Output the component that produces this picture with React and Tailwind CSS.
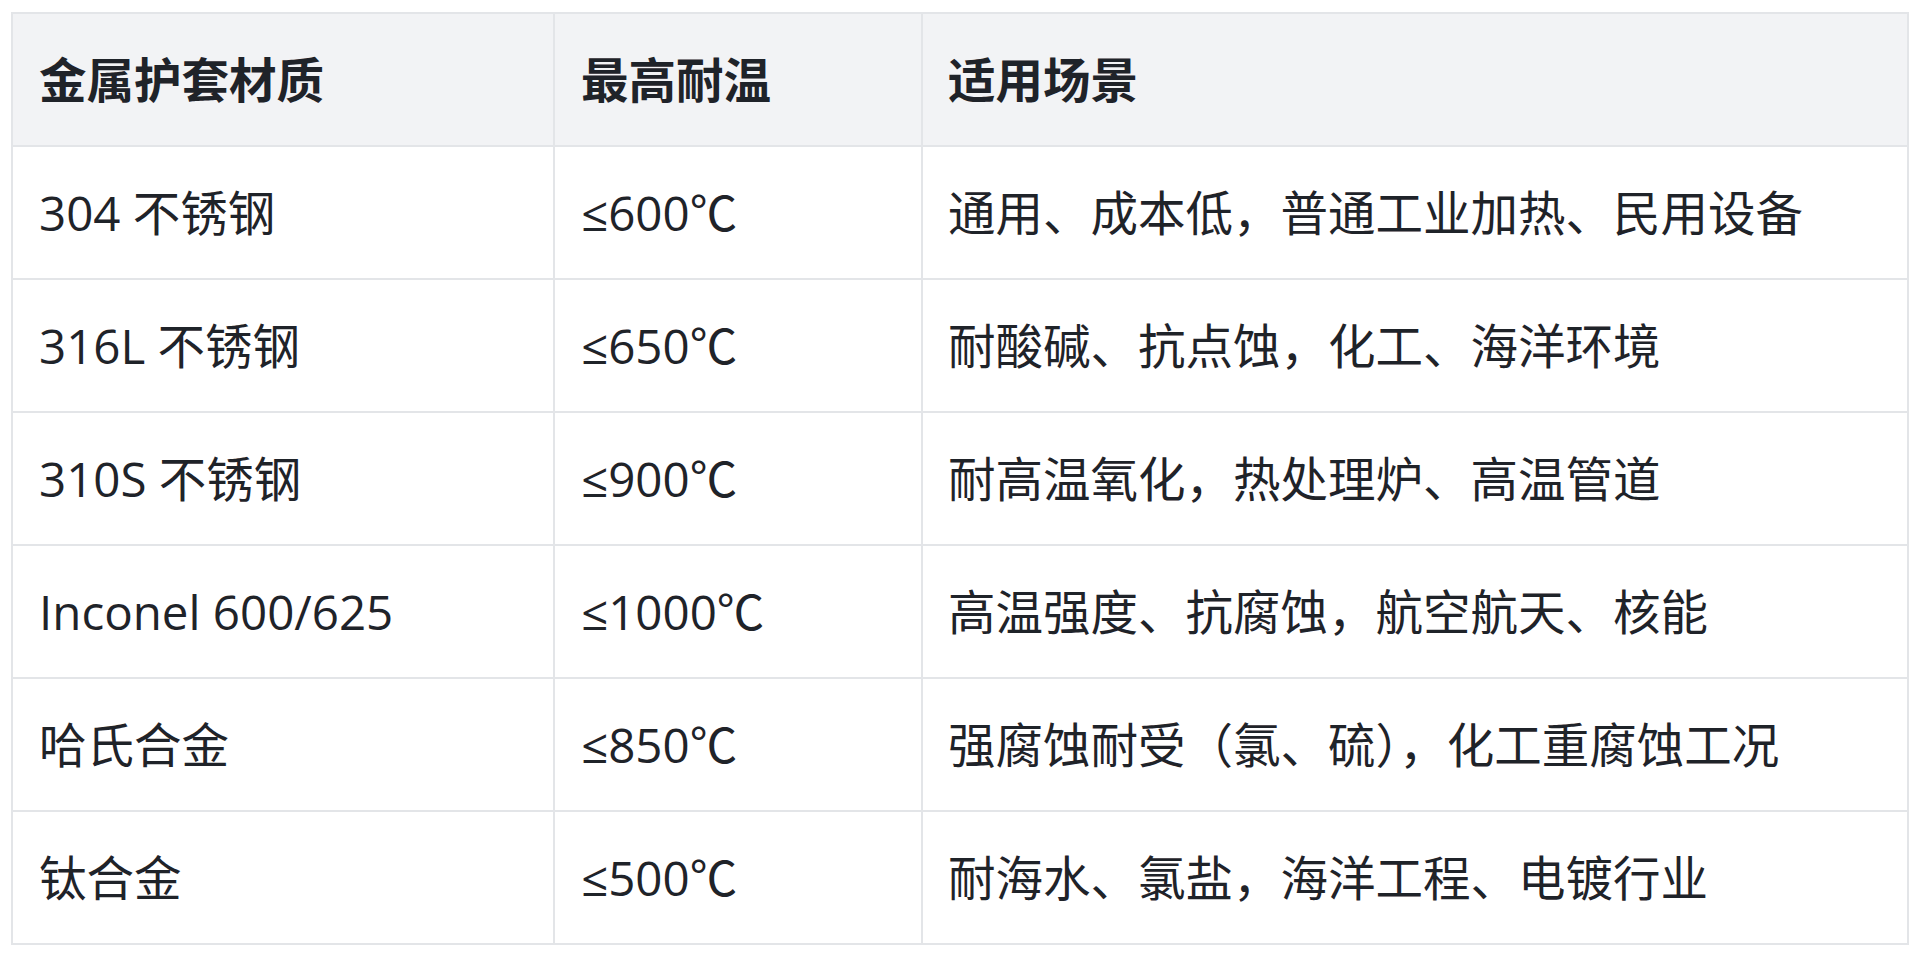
const rows = [
  ['304 不锈钢', '≤600℃', '通用、成本低，普通工业加热、民用设备'],
  ['316L 不锈钢', '≤650℃', '耐酸碱、抗点蚀，化工、海洋环境'],
  ['310S 不锈钢', '≤900℃', '耐高温氧化，热处理炉、高温管道'],
  ['Inconel 600/625', '≤1000℃', '高温强度、抗腐蚀，航空航天、核能'],
  ['哈氏合金', '≤850℃', '强腐蚀耐受（氯、硫），化工重腐蚀工况'],
  ['钛合金', '≤500℃', '耐海水、氯盐，海洋工程、电镀行业'],
]

const font = { fontFamily: '"Open Sans", "Noto Sans CJK SC", sans-serif' }

export default function App() {
  return (
    <div className="min-h-screen bg-white px-[11px] pt-[12px]" style={font}>
      <table className="w-full table-fixed border-collapse text-[47.5px] leading-none text-[#1f2329]">
        <colgroup>
          <col className="w-[542px]" />
          <col className="w-[368px]" />
          <col />
        </colgroup>
        <thead>
          <tr className="h-[133px] bg-[#f2f3f5]">
            <th className="border-2 border-[#e3e5e8] pl-[26px] text-left font-bold">金属护套材质</th>
            <th className="border-2 border-[#e3e5e8] pl-[26px] text-left font-bold">最高耐温</th>
            <th className="border-2 border-[#e3e5e8] pl-[25px] text-left font-bold">适用场景</th>
          </tr>
        </thead>
        <tbody>
          {rows.map((r) => (
            <tr key={r[0]} className="h-[133px] bg-white">
              <td className="border-2 border-[#e3e5e8] pl-[26px] whitespace-nowrap">{r[0]}</td>
              <td className="border-2 border-[#e3e5e8] pl-[26px] whitespace-nowrap">{r[1]}</td>
              <td className="border-2 border-[#e3e5e8] pl-[25px] whitespace-nowrap">{r[2]}</td>
            </tr>
          ))}
        </tbody>
      </table>
    </div>
  )
}
